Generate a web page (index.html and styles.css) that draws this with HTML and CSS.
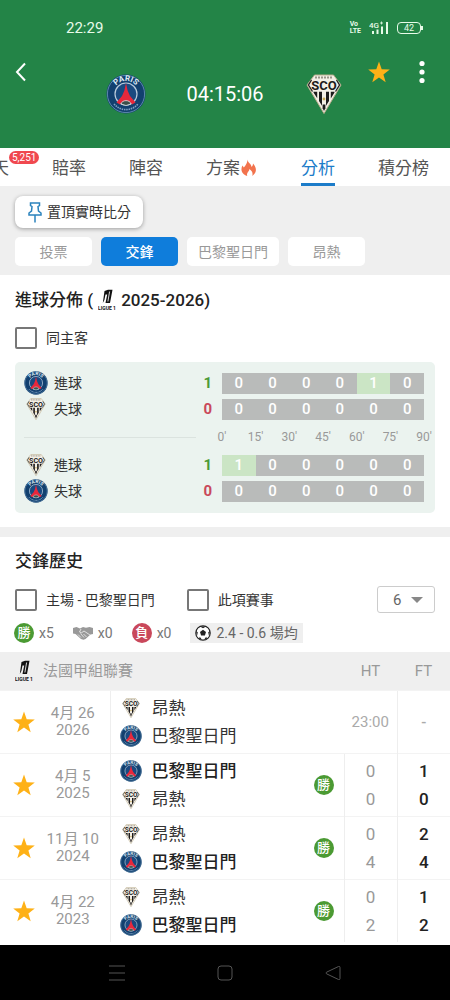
FILE: index.html
```html
<!DOCTYPE html>
<html lang="zh-Hant">
  <head>
    <meta charset="UTF-8" />
    <meta name="viewport" content="width=device-width, initial-scale=1.0" />
    <title>分析</title>
    <link rel="stylesheet" href="styles.css">
  </head>
  <body>
    <!-- shared icons -->
    <svg class="sprite" aria-hidden="true">
      <symbol id="psg" viewBox="0 0 40 40">
        <circle cx="20" cy="20" r="19.5" fill="#12406f" />
        <circle cx="20" cy="20" r="18.6" fill="none" stroke="#6f98bb" stroke-width="0.8" />
        <circle cx="20" cy="20" r="11" fill="#1a4a80" stroke="#b9cbdc" stroke-width="1.2" />
        <path d="M20 9l1.600 7.500 2.400 5.500 5.500 6.500-3.500 2c-1.400-4-10.600-4-12 0L10.500 28.500l5.500-6.500 2.400-5.500z" fill="#e8283b" />
        <path d="M15 30c1-4.500 9-4.500 10 0l-5 1.500z" fill="#3c4f4a" stroke="#dfe6ea" stroke-width="0.8" />
        <path id="psgArc" d="M7.500 18A12.600 12.600 0 0 1 32.500 18" fill="none" />
        <text font-size="8" font-weight="700" fill="#dfe9f2" text-anchor="middle"><textPath href="#psgArc" startOffset="50%">PARIS</textPath></text>
        <path d="M8 30c6.500 7.500 17.500 7.500 24 0" fill="none" stroke="#7fa2c4" stroke-width="1.600" stroke-dasharray="1.500 0.800" />
      </symbol>
      <symbol id="sco" viewBox="0 0 36 40">
        <path d="M8.500 1h19L35 11 18 39.500 1 11z" fill="#f3efe6" stroke="#b9ad8c" stroke-width="1" />
        <path d="M9 3.500h18" stroke="#9a9488" stroke-width="1.800" stroke-dasharray="2 1" />
        <path d="M7.500 18.500v-.7h3.700v6.500zM13 17.800h3v14l-3-4.800zM20 17.800h3V27l-3 4.800zM24.800 17.800h3.700v.7l-3.700 6z" fill="#1d1b1b" />
        <path d="M16.600 30.500h2.800v3.700L18 37l-1.400-2.800z" fill="#1d1b1b" />
        <path d="M5.500 6L2.500 11l4 6.500M30.500 6l3 5-4 6.500" fill="none" stroke="#222" stroke-width="1.300" />
        <circle cx="18" cy="25" r="1.400" fill="#c9a955" />
        <text x="18" y="16" font-size="13" font-weight="700" fill="#1d1b1b" text-anchor="middle">SCO</text>
      </symbol>
      <symbol id="star" viewBox="0 0 24 24">
        <path d="M12 1.500l2.700 7.700 8.100.2-6.400 5 2.300 7.900-6.700-4.700-6.700 4.700 2.300-7.900-6.400-5 8.100-.2z" fill="#feb117" />
      </symbol>
      <symbol id="ligue" viewBox="0 0 18 22">
        <path d="M6.500 2L10 .8h4.500L12 14H7.500l1.700-8.500H7.500L6.400 11 4.800 14z" fill="#111" />
        <path d="M11.600 2.500L9.900 12.500" stroke="#efefef" stroke-width="0.900" />
        <text x="9" y="21" font-size="5" font-weight="700" fill="#111" text-anchor="middle">LIGUE 1</text>
      </symbol>
    </svg>

    <header class="header">
      <div class="status">
        <span>22:29</span>
        <div class="status-icons">
          <span class="volte">Vo<br>LTE</span>
          <svg width="20" height="14" viewBox="0 0 20 14" fill="#e8fbe9">
            <text x="0" y="6.500" font-size="8" font-weight="500">4G</text>
            <path d="M11 2h3M12.500 0.500v3" stroke="#e8fbe9" stroke-width="0.800" />
            <path d="M3 10h2v3H3zM7.500 8.500h2V13h-2zM12 5.500h2V13h-2zM17 1h2v12h-2z" />
          </svg>
          <span class="battery">42</span>
        </div>
      </div>
      <div class="match">
        <button class="icon-btn" aria-label="返回">
          <svg width="14" height="20" viewBox="0 0 14 20"><path d="M11 1.500L3 10l8 8.500" fill="none" stroke="#fff" stroke-width="2" /></svg>
        </button>
        <div class="teams">
          <svg width="40" height="40"><use href="#psg" /></svg>
          <span class="countdown">04:15:06</span>
          <svg width="36" height="40"><use href="#sco" /></svg>
        </div>
        <div class="actions">
          <button class="icon-btn" aria-label="收藏"><svg width="24" height="24"><use href="#star" /></svg></button>
          <button class="icon-btn" aria-label="更多">
            <svg width="16" height="24" viewBox="0 0 16 24" fill="#fff"><circle cx="8" cy="3.500" r="2.600" /><circle cx="8" cy="12" r="2.600" /><circle cx="8" cy="20.500" r="2.600" /></svg>
          </button>
        </div>
      </div>
    </header>

    <nav class="tabs">
      <a href="#">天<span class="count">5,251</span></a>
      <a href="#">賠率</a>
      <a href="#">陣容</a>
      <a href="#">方案<svg width="18" height="18" viewBox="0 0 18 18"><path d="M7.500 0.500c0 3 4 4.500 4 7.500 1-.8 1.500-2 1.500-3.500 3.500 3.500 4.500 9-.8 12.500 1-3-.2-5-2.700-7-.2 2.500-3.500 3.500-2.200 7C1 15 .5 10 2.500 6.500l1.300 2C5.500 6.500 7.500 4 7.500.5z" fill="#f2734d" /></svg></a>
      <a href="#" class="active">分析</a>
      <a href="#">積分榜</a>
    </nav>

    <div class="toolbar">
      <button class="pin">
        <svg width="14" height="21" viewBox="0 0 14 21" fill="none" stroke="#2b83bd" stroke-width="1.500"><path d="M2.500 1h9v2.500L10 4.500l.5 4.500 2.500 2v2H1v-2l2.500-2L4 4.500l-1.500-1zM7 13v7.500" /></svg>
        置頂實時比分
      </button>
      <div class="chips">
        <button>投票</button>
        <button class="active">交鋒</button>
        <button>巴黎聖日門</button>
        <button>昂熱</button>
      </div>
    </div>

    <section class="goals">
      <h2>進球分佈 ( <svg width="18" height="22"><use href="#ligue" /></svg> 2025-2026)</h2>
      <label class="check"><input type="checkbox">同主客</label>

      <div class="panel">
        <div class="goal-row">
          <div class="side"><svg width="24" height="24"><use href="#psg" /></svg>進球<b class="for">1</b></div>
          <div class="bar"><span>0</span><span>0</span><span>0</span><span>0</span><span class="hit">1</span><span>0</span></div>
        </div>
        <div class="goal-row">
          <div class="side"><svg width="24" height="22"><use href="#sco" /></svg>失球<b class="against">0</b></div>
          <div class="bar"><span>0</span><span>0</span><span>0</span><span>0</span><span>0</span><span>0</span></div>
        </div>
        <div class="axis-row">
          <hr>
          <div class="axis"><span>0'</span><span>15'</span><span>30'</span><span>45'</span><span>60'</span><span>75'</span><span>90'</span></div>
        </div>
        <div class="goal-row">
          <div class="side"><svg width="24" height="22"><use href="#sco" /></svg>進球<b class="for">1</b></div>
          <div class="bar"><span class="hit">1</span><span>0</span><span>0</span><span>0</span><span>0</span><span>0</span></div>
        </div>
        <div class="goal-row">
          <div class="side"><svg width="24" height="24"><use href="#psg" /></svg>失球<b class="against">0</b></div>
          <div class="bar"><span>0</span><span>0</span><span>0</span><span>0</span><span>0</span><span>0</span></div>
        </div>
      </div>
    </section>

    <section class="history">
      <h2>交鋒歷史</h2>
      <div class="filters">
        <label class="check"><input type="checkbox">主場 - 巴黎聖日門</label>
        <label class="check"><input type="checkbox">此項賽事</label>
        <div class="limit">
          <select aria-label="場數"><option>6</option></select>
        </div>
      </div>
      <div class="summary">
        <span class="stat"><i class="badge win">勝</i>x5</span>
        <span class="stat"><svg width="20" height="14" viewBox="0 0 20 14"><path d="M0 2l3.500-1L7 2.500 10 1l3 .8L16.500 1 20 2v6l-2.500.5-5 4.500-2 .8-2.500-.8L2.500 8 0 7.500z" fill="#999" /><path d="M8 3L6.500 6l2 .8L11 5l6 4M5 8.500l3 3M7.500 7.500l3.500 4M10.500 8l3 3" fill="none" stroke="#fff" stroke-width="0.700" /></svg>x0</span>
        <span class="stat"><i class="badge lose">負</i>x0</span>
        <span class="stat average"><svg width="16" height="16" viewBox="0 0 16 16"><circle cx="8" cy="8" r="7.200" fill="#fff" stroke="#222" stroke-width="1.200" /><path d="M8 4.800l3 2.200-1.100 3.600H6.100L5 7zM5 1.500h6L8 3.300zM1 6l1.800 1.300L2 11zM15 6l-1.800 1.300L14 11zM4 13.800l.8-2 2.200 3zM12 13.800l-.8-2L9 14.800z" fill="#222" /></svg>2.4 - 0.6 場均</span>
      </div>

      <table>
        <colgroup>
          <col class="col-when">
          <col>
          <col class="col-score">
          <col class="col-score">
        </colgroup>
        <thead>
          <tr>
            <th colspan="2"><div class="league"><svg width="18" height="22"><use href="#ligue" /></svg>法國甲組聯賽</div></th>
            <th class="score">HT</th>
            <th class="score">FT</th>
          </tr>
        </thead>
        <tbody>
          <tr class="upcoming">
            <td class="when"><div><svg width="24" height="24"><use href="#star" /></svg><span>4月 26<br>2026</span></div></td>
            <td class="clubs"><div>
              <p><svg width="22" height="20"><use href="#sco" /></svg>昂熱</p>
              <p><svg width="22" height="22"><use href="#psg" /></svg>巴黎聖日門</p>
            </div></td>
            <td class="score ht">23:00</td>
            <td class="score ft">-</td>
          </tr>
          <tr>
            <td class="when"><div><svg width="24" height="24"><use href="#star" /></svg><span>4月 5<br>2025</span></div></td>
            <td class="clubs"><div>
              <p class="winner"><svg width="22" height="22"><use href="#psg" /></svg>巴黎聖日門</p>
              <p><svg width="22" height="20"><use href="#sco" /></svg>昂熱</p>
              <i class="badge win">勝</i>
            </div></td>
            <td class="score ht">0<br>0</td>
            <td class="score ft">1<br>0</td>
          </tr>
          <tr>
            <td class="when"><div><svg width="24" height="24"><use href="#star" /></svg><span>11月 10<br>2024</span></div></td>
            <td class="clubs"><div>
              <p><svg width="22" height="20"><use href="#sco" /></svg>昂熱</p>
              <p class="winner"><svg width="22" height="22"><use href="#psg" /></svg>巴黎聖日門</p>
              <i class="badge win">勝</i>
            </div></td>
            <td class="score ht">0<br>4</td>
            <td class="score ft">2<br>4</td>
          </tr>
          <tr>
            <td class="when"><div><svg width="24" height="24"><use href="#star" /></svg><span>4月 22<br>2023</span></div></td>
            <td class="clubs"><div>
              <p><svg width="22" height="20"><use href="#sco" /></svg>昂熱</p>
              <p class="winner"><svg width="22" height="22"><use href="#psg" /></svg>巴黎聖日門</p>
              <i class="badge win">勝</i>
            </div></td>
            <td class="score ht">0<br>2</td>
            <td class="score ft">1<br>2</td>
          </tr>
        </tbody>
      </table>
    </section>

    <footer class="system-nav">
      <button class="icon-btn" aria-label="選單"><svg width="16" height="16" viewBox="0 0 16 16"><path d="M0 1h16M0 8h16M0 15h16" stroke="#555" stroke-width="1" /></svg></button>
      <button class="icon-btn" aria-label="主畫面"><svg width="16" height="16" viewBox="0 0 16 16"><rect x="1" y="1" width="14" height="14" rx="3" fill="none" stroke="#555" /></svg></button>
      <button class="icon-btn" aria-label="返回"><svg width="16" height="16" viewBox="0 0 16 16"><path d="M13.500 1.500Q15 1 15 2.500v11q0 1.500-1.500 1L1.500 8.800q-1-.8 0-1.600z" fill="none" stroke="#555" /></svg></button>
    </footer>
  </body>
</html>
```

FILE: styles.css
```css
* {
  box-sizing: border-box;
}

body {
  margin: 0;
  font-family: Roboto, "Noto Sans CJK TC", sans-serif;
  font-size: 14px;
  line-height: 20px;
  color: #333;
  background: #fff;
}

svg {
  display: block;
  flex: none;
}

button,
select {
  font: inherit;
  color: inherit;
}

h2 {
  display: flex;
  align-items: center;
  gap: 5px;
  margin: 0;
  font-size: 17px;
  font-weight: 500;
  line-height: 24px;
  color: #222;
}

.sprite {
  display: none;
}

.icon-btn {
  display: block;
  padding: 0;
  border: none;
  background: none;
  cursor: pointer;
}

/* header */
.header {
  background: #238447;
  color: #fff;
  padding: 18px 0 34px;
}

.status {
  display: flex;
  justify-content: space-between;
  align-items: center;
  padding: 0 29px 0 66px;
  font-size: 15px;
  color: #e8fbe9;
}

.status-icons {
  display: flex;
  align-items: center;
  gap: 8px;
}

.volte {
  font-size: 7px;
  font-weight: 700;
  line-height: 7px;
}

.battery {
  position: relative;
  width: 24px;
  border: 1px solid #e8fbe9;
  border-radius: 4px;
  font-size: 9px;
  line-height: 10px;
  text-align: center;
}

.battery::after {
  content: "";
  position: absolute;
  right: -3px;
  top: 3px;
  width: 2px;
  height: 4px;
  background: #e8fbe9;
}

.match {
  display: grid;
  grid-template-columns: 1fr 256px 1fr;
  align-items: start;
  padding-top: 22px;
}

.match > .icon-btn {
  justify-self: start;
  margin-left: 14px;
  padding-top: 2px;
}

.teams {
  display: grid;
  grid-template-columns: 58px 1fr 58px;
  place-items: center;
  padding-top: 14px;
}

.countdown {
  font-size: 20px;
}

.actions {
  display: flex;
  justify-content: flex-end;
  gap: 23px;
  padding-right: 20px;
}

/* tabs */
.tabs {
  display: flex;
  justify-content: flex-end;
  gap: 43px;
  padding-right: 21px;
  overflow: hidden;
}

.tabs a {
  display: flex;
  align-items: center;
  position: relative;
  flex: none;
  height: 38px;
  padding-top: 5px;
  border-bottom: 3px solid transparent;
  font-size: 17px;
  color: #555;
  text-decoration: none;
}

.tabs a.active {
  border-color: #1c7cc9;
  color: #1c7cc9;
}

.count {
  position: absolute;
  left: 100%;
  top: 3px;
  padding: 0 3px;
  border-radius: 7px;
  background: #f0484f;
  color: #fff;
  font-size: 10px;
  line-height: 13px;
}

/* toolbar */
.toolbar {
  padding: 10px 15px 9px;
  background: #efefef;
}

.pin {
  display: flex;
  align-items: center;
  gap: 5px;
  height: 32px;
  padding: 0 12px 0 13px;
  border: none;
  border-radius: 8px;
  background: #fff;
  box-shadow: 0 1px 4px rgba(0, 0, 0, 0.35);
  cursor: pointer;
}

.chips {
  display: flex;
  gap: 9px;
  margin-top: 9px;
}

.chips button {
  min-width: 77px;
  height: 29px;
  padding: 0 11px;
  border: none;
  border-radius: 5px;
  background: #fff;
  color: #999;
  cursor: pointer;
}

.chips .active {
  background: #0f7ddb;
  color: #fff;
  font-weight: 500;
}

/* goal distribution */
.goals {
  padding: 13px 15px 14px;
  border-bottom: 10px solid #efefef;
}

.check {
  display: flex;
  align-items: center;
  gap: 9px;
}

.check input {
  appearance: none;
  width: 22px;
  height: 22px;
  margin: 0;
  border: 2px solid #777;
  border-radius: 2px;
  background: #fff;
}

.check input:checked {
  background: #0f7ddb;
}

.goals .check {
  margin: 15px 0 13px;
}

.panel {
  padding: 8px 11px 9px 9px;
  border-radius: 5px;
  background: #ebf3ef;
}

.goal-row,
.axis-row {
  display: flex;
  align-items: center;
  height: 26px;
}

.side {
  display: flex;
  align-items: center;
  gap: 6px;
  width: 198px;
  padding-right: 10px;
}

.side b {
  margin-left: auto;
  font-size: 15px;
}

.for {
  color: #4b9a38;
}

.against {
  color: #c9485b;
}

.bar {
  display: grid;
  grid-template-columns: repeat(6, 1fr);
  flex: 1;
  background: #b9bbba;
  color: #fff;
  font-size: 15px;
  font-weight: 500;
  line-height: 21px;
  text-align: center;
}

.hit {
  background: #cbe5c5;
}

.axis-row {
  height: 30px;
}

.axis-row hr {
  width: 172px;
  margin: 0 9px 0 0;
  border: none;
  border-top: 1px solid #dbe3df;
}

.axis {
  display: grid;
  grid-template-columns: repeat(7, 1fr);
  flex: 1;
  margin-right: -17px;
  color: #999;
  font-size: 12px;
  text-align: center;
}

/* history */
.history {
  padding-bottom: 3px;
}

.history h2 {
  padding: 12px 15px 0;
}

.filters {
  display: flex;
  align-items: center;
  gap: 32px;
  padding: 13px 15px 0;
}

.limit {
  position: relative;
  margin-left: auto;
}

.limit select {
  appearance: none;
  display: block;
  width: 58px;
  height: 27px;
  padding: 0 15px;
  border: 1px solid #ccc;
  border-radius: 3px;
  background: #fff;
  font-size: 15px;
  color: #666;
}

.limit::after {
  content: "";
  position: absolute;
  right: 12px;
  top: 11px;
  border: 6px solid transparent;
  border-top-color: #888;
  border-bottom: none;
  pointer-events: none;
}

.summary {
  display: flex;
  align-items: center;
  gap: 19px;
  padding: 10px 14px 9px;
  color: #777;
}

.stat {
  display: flex;
  align-items: center;
  gap: 5px;
}

.average {
  padding: 0 5px;
  background: #efefef;
  color: #666;
}

.badge {
  width: 20px;
  height: 20px;
  border-radius: 50%;
  color: #fff;
  font-size: 13px;
  font-style: normal;
  font-weight: 500;
  line-height: 19px;
  text-align: center;
}

.win {
  background: #4b9a33;
}

.lose {
  background: #c9485b;
}

table {
  width: 100%;
  border-collapse: collapse;
  table-layout: fixed;
}

.col-when {
  width: 110px;
}

.col-score {
  width: 53px;
}

th {
  height: 38px;
  padding: 0;
  background: #efefef;
  color: #999;
  font-size: 15px;
  font-weight: 400;
  text-align: left;
}

.league {
  display: flex;
  align-items: center;
  gap: 10px;
  padding-left: 15px;
}

td {
  height: 63px;
  padding: 0;
  border-top: 1px solid #f3f3f3;
}

.score {
  text-align: center;
}

.when > div {
  display: flex;
  align-items: center;
  padding-left: 12px;
  color: #999;
  font-size: 15px;
  line-height: 17px;
}

.when span {
  flex: 1;
  text-align: center;
}

.clubs {
  border-left: 1px solid #eee;
}

.clubs > div {
  position: relative;
  padding-left: 9px;
}

.clubs p {
  display: flex;
  align-items: center;
  gap: 10px;
  margin: 0;
  font-size: 17px;
  line-height: 28px;
}

.clubs .winner {
  color: #222;
  font-weight: 500;
}

.clubs .badge {
  position: absolute;
  right: 10px;
  top: 18px;
}

td.score {
  border-left: 1px solid #eee;
  font-size: 17px;
  line-height: 28px;
}

.ht {
  color: #999;
}

.ft {
  color: #222;
  font-weight: 500;
}

.upcoming .score {
  color: #aaa;
  font-size: 15px;
}

.upcoming .ht {
  border-left: none;
}

/* phone buttons */
.system-nav {
  display: flex;
  justify-content: center;
  align-items: center;
  gap: 92px;
  height: 55px;
  background: #000;
}
```
